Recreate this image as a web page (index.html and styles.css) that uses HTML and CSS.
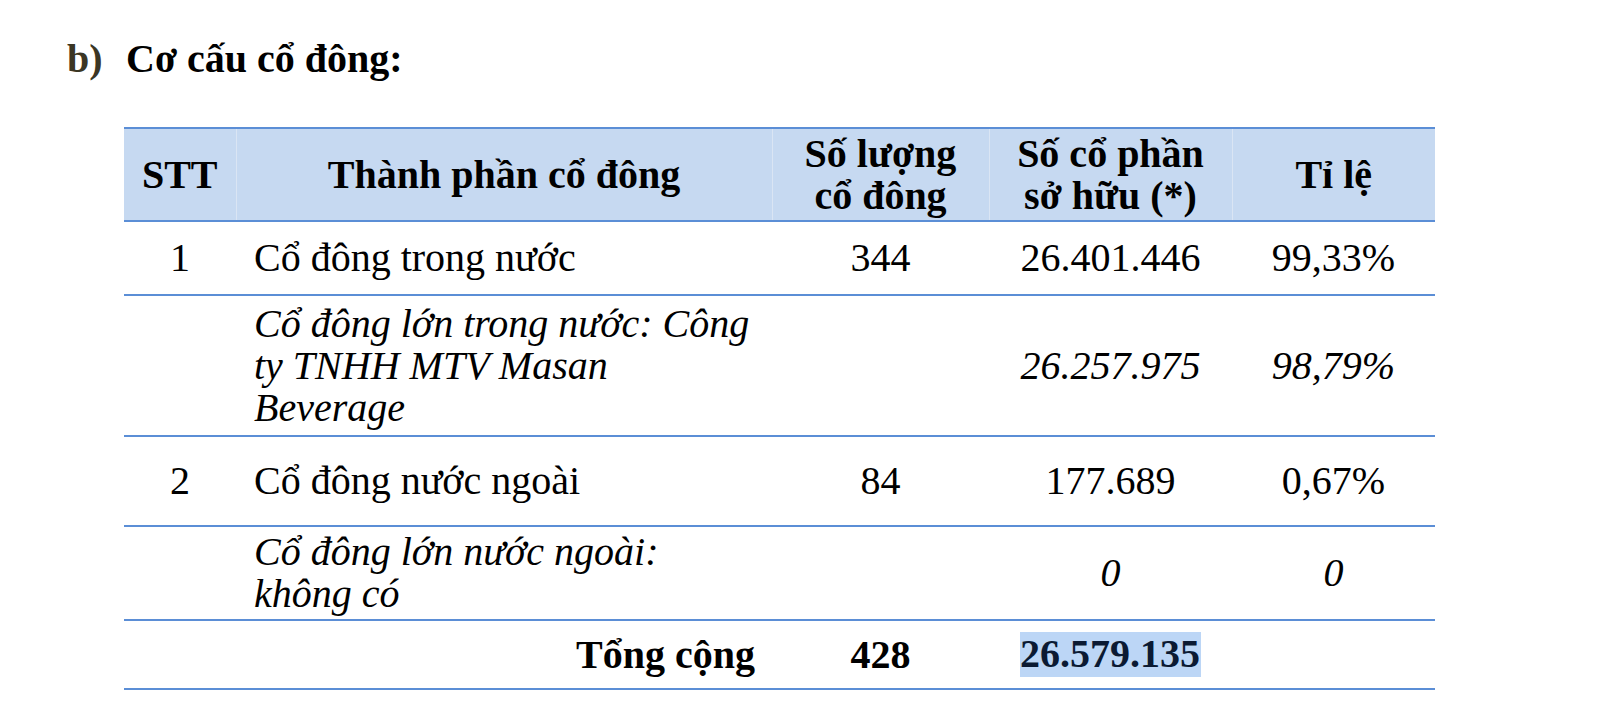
FILE: index.html
```html
<!DOCTYPE html>
<html lang="vi">
<head>
<meta charset="utf-8">
<link rel="stylesheet" href="styles.css">
</head>
<body>
<div class="page">
  <h2 class="title"><span class="num">b)</span>Cơ cấu cổ đông:</h2>
  <table class="tbl">
    <colgroup>
      <col class="c1"><col class="c2"><col class="c3"><col class="c4"><col class="c5">
    </colgroup>
    <thead>
      <tr class="head">
        <th>STT</th>
        <th>Thành phần cổ đông</th>
        <th>Số lượng<br>cổ đông</th>
        <th>Số cổ phần<br>sở hữu (*)</th>
        <th>Tỉ lệ</th>
      </tr>
    </thead>
    <tbody>
      <tr class="r1">
        <td class="ctr">1</td>
        <td class="name">Cổ đông trong nước</td>
        <td class="ctr">344</td>
        <td class="ctr">26.401.446</td>
        <td class="ctr">99,33%</td>
      </tr>
      <tr class="r2 it">
        <td></td>
        <td class="name">Cổ đông lớn trong nước: Công<br>ty TNHH MTV Masan<br>Beverage</td>
        <td></td>
        <td class="ctr">26.257.975</td>
        <td class="ctr">98,79%</td>
      </tr>
      <tr class="r3">
        <td class="ctr">2</td>
        <td class="name">Cổ đông nước ngoài</td>
        <td class="ctr">84</td>
        <td class="ctr">177.689</td>
        <td class="ctr">0,67%</td>
      </tr>
      <tr class="r4 it">
        <td></td>
        <td class="name">Cổ đông lớn nước ngoài:<br>không có</td>
        <td></td>
        <td class="ctr">0</td>
        <td class="ctr">0</td>
      </tr>
      <tr class="r5 total">
        <td colspan="2" class="right">Tổng cộng</td>
        <td class="ctr">428</td>
        <td class="ctr"><span class="hl">26.579.135</span></td>
        <td></td>
      </tr>
    </tbody>
  </table>
</div>
</body>
</html>
```
FILE: styles.css
```css
html, body {
  margin: 0;
  padding: 0;
  background: #ffffff;
}
.page {
  font-family: "Liberation Serif", "Times New Roman", serif;
  color: #000;
  font-size: 40px;
  line-height: 42px;
  padding-top: 38px;
}
.title {
  margin: 0 0 47px 67px;
  font-size: 40px;
  line-height: 42px;
  font-weight: bold;
}
.title .num {
  display: inline-block;
  width: 59px;
  color: #3b3624;
}
.tbl {
  margin-left: 124px;
  border-collapse: collapse;
  table-layout: fixed;
  width: 1311px;
}
.c1 { width: 112px; }
.c2 { width: 536px; }
.c3 { width: 217px; }
.c4 { width: 243px; }
.c5 { width: 203px; }
.tbl th, .tbl td {
  padding: 0;
  vertical-align: middle;
  font-size: 40px;
  line-height: 42px;
}
.head th {
  background: #c6d9f1;
  font-weight: bold;
  text-align: center;
  height: 91px;
  border-top: 2px solid #5b8ed6;
  border-bottom: 2px solid #5b8ed6;
  border-left: 1px solid #dae5f4;
  border-right: 1px solid #dae5f4;
}
.head th:first-child { border-left: none; }
.head th:last-child { border-right: none; }
.tbl tbody tr td {
  border-bottom: 2px solid #5b8ed6;
}
.r1 td { height: 72px; }
.r2 td { height: 139px; }
.r3 td { height: 88px; }
.r4 td { height: 92px; }
.r5 td { height: 67px; }
.ctr { text-align: center; }
.name {
  text-align: left;
  padding-left: 18px !important;
  padding-right: 16px !important;
}
.it td { font-style: italic; }
.right {
  text-align: right;
  padding-right: 17px !important;
}
.total td { font-weight: bold; }
.hl {
  background: #bcd6f6;
  color: #0b1a33;
  display: inline-block;
  padding: 1px 1px 2px 0;
}
```
